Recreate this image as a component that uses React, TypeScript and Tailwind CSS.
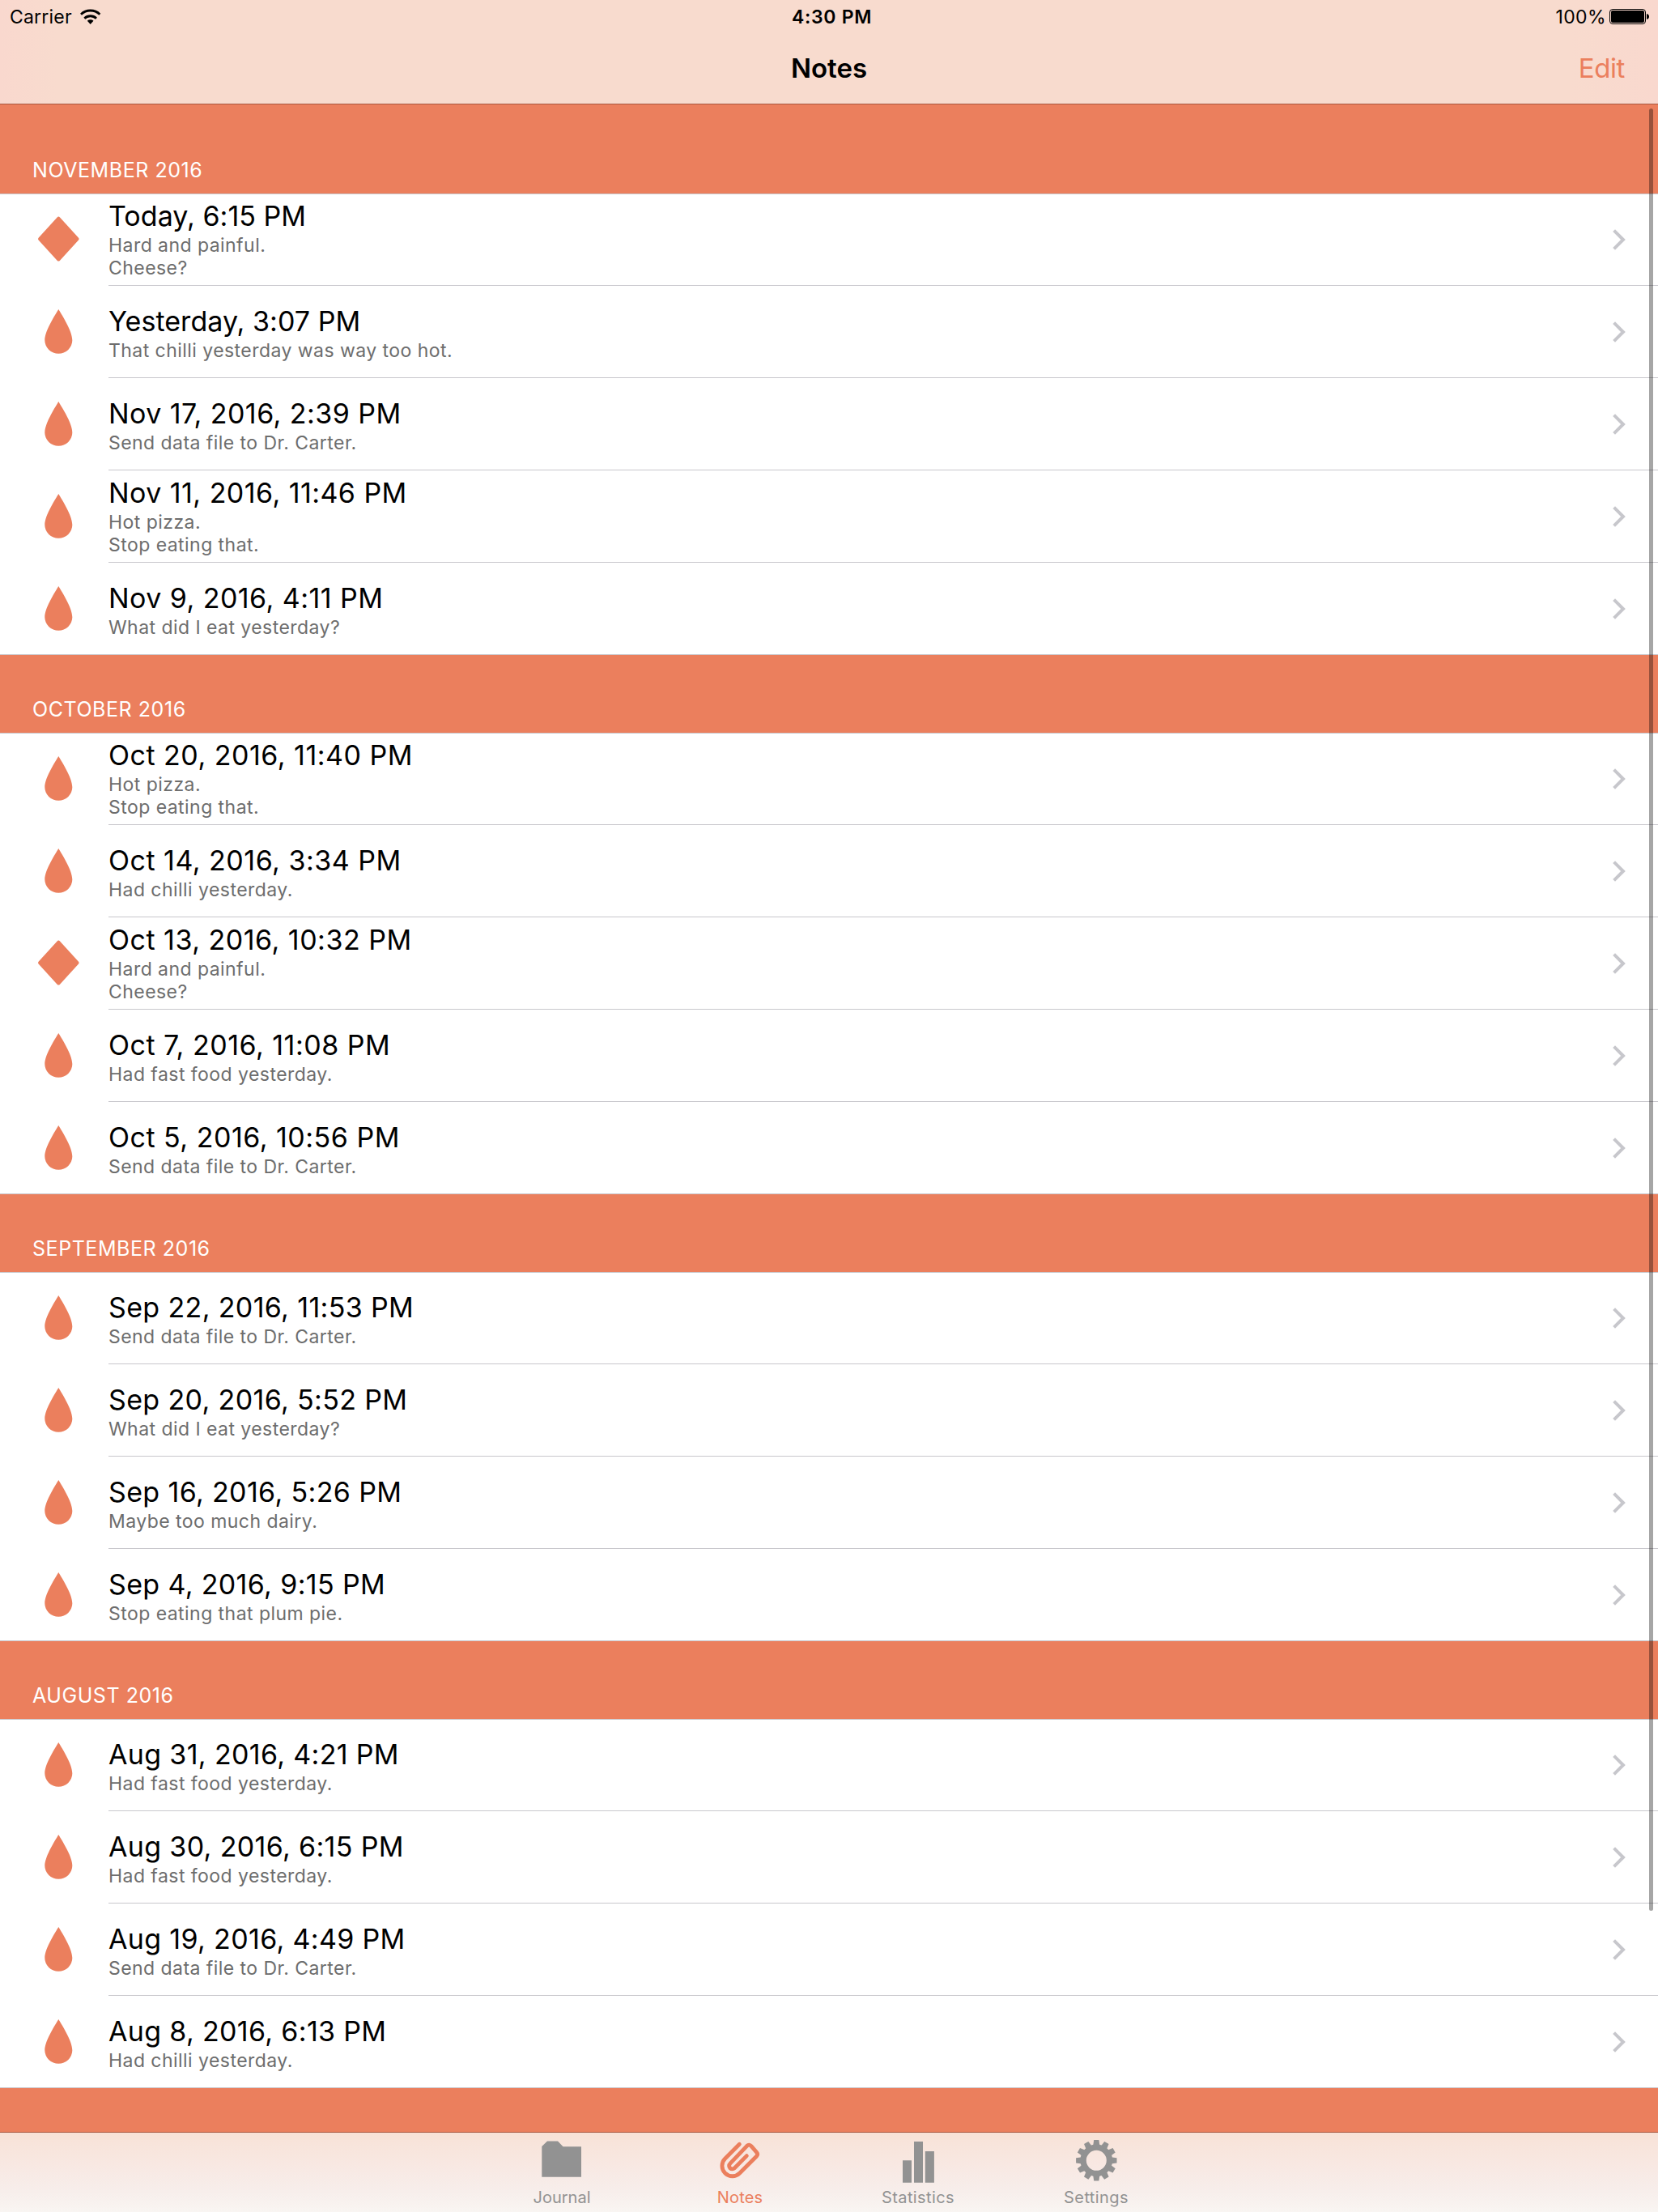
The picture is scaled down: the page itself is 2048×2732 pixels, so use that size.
import type { ReactNode } from 'react';

type Kind = 'drop' | 'diamond';
type Note = { kind: Kind; date: string; lines: string[] };
type Section = { title: string; tracking: string; notes: Note[] };

const note = (date: string, lines: string[], kind: Kind = 'drop'): Note => ({ kind, date, lines });

const sections: Section[] = [
  {
    title: 'NOVEMBER 2016',
    tracking: 'tracking-[0.45px]',
    notes: [
      note('Today, 6:15 PM', ['Hard and painful.', 'Cheese?'], 'diamond'),
      note('Yesterday, 3:07 PM', ['That chilli yesterday was way too hot.']),
      note('Nov 17, 2016, 2:39 PM', ['Send data file to Dr. Carter.']),
      note('Nov 11, 2016, 11:46 PM', ['Hot pizza.', 'Stop eating that.']),
      note('Nov 9, 2016, 4:11 PM', ['What did I eat yesterday?']),
    ],
  },
  {
    title: 'OCTOBER 2016',
    tracking: 'tracking-[0.5px]',
    notes: [
      note('Oct 20, 2016, 11:40 PM', ['Hot pizza.', 'Stop eating that.']),
      note('Oct 14, 2016, 3:34 PM', ['Had chilli yesterday.']),
      note('Oct 13, 2016, 10:32 PM', ['Hard and painful.', 'Cheese?'], 'diamond'),
      note('Oct 7, 2016, 11:08 PM', ['Had fast food yesterday.']),
      note('Oct 5, 2016, 10:56 PM', ['Send data file to Dr. Carter.']),
    ],
  },
  {
    title: 'SEPTEMBER 2016',
    tracking: 'tracking-[0.36px]',
    notes: [
      note('Sep 22, 2016, 11:53 PM', ['Send data file to Dr. Carter.']),
      note('Sep 20, 2016, 5:52 PM', ['What did I eat yesterday?']),
      note('Sep 16, 2016, 5:26 PM', ['Maybe too much dairy.']),
      note('Sep 4, 2016, 9:15 PM', ['Stop eating that plum pie.']),
    ],
  },
  {
    title: 'AUGUST 2016',
    tracking: 'tracking-[0.34px]',
    notes: [
      note('Aug 31, 2016, 4:21 PM', ['Had fast food yesterday.']),
      note('Aug 30, 2016, 6:15 PM', ['Had fast food yesterday.']),
      note('Aug 19, 2016, 4:49 PM', ['Send data file to Dr. Carter.']),
      note('Aug 8, 2016, 6:13 PM', ['Had chilli yesterday.']),
    ],
  },
];

function Wifi() {
  return (
    <svg className="h-8 w-11" viewBox="0 0 132 96" fill="none" stroke="#000" strokeWidth="8.5">
      <path d="M33 38a51 51 0 0 1 70 0M46 53a32 32 0 0 1 44 0" />
      <path d="M68 75 56.500 62.500a17 17 0 0 1 23 0z" fill="#000" stroke="none" />
    </svg>
  );
}

function Battery() {
  return (
    <svg className="h-[19px] w-[49px]" viewBox="0 0 49 19">
      <rect x="0.5" y="0.5" width="44" height="18" rx="3.500" fill="none" stroke="#000" />
      <rect x="2" y="2" width="41" height="15" rx="2" />
      <path d="M46 6c2 .3 3 1.700 3 3.500S48 12.700 46 13z" />
    </svg>
  );
}

function KindIcon({ kind }: { kind: Kind }) {
  return (
    <svg className="mb-[29px] ml-11 h-14 w-14 shrink-0 self-end" viewBox="0 0 56 56" fill="#eb7f5d">
      {kind === 'diamond' ? (
        <path d="M26.600 1.500Q28.300-.3 30 1.500L52.800 26.600Q54.300 28.200 52.800 29.800L30 54.700Q28.300 56.500 26.600 54.700L3.800 29.800Q2.300 28.200 3.800 26.600z" />
      ) : (
        <path d="M28.300 1C31.700 6.800 45.300 27.500 45.300 39.200A17 16.600 0 0 1 11.300 39.200C11.300 27.500 24.900 6.800 28.300 1z" />
      )}
    </svg>
  );
}

function Row({ item, tracking, first, last }: { item: Note; tracking: string; first: boolean; last: boolean }) {
  return (
    <li className={first ? 'flex h-[113px] bg-white' : 'flex h-[114px] bg-white'}>
      <div className={`flex w-[134px] border-b ${last ? 'border-[#c8c7cc]' : 'border-white'}`}>
        <KindIcon kind={item.kind} />
      </div>
      <div
        className={
          item.lines.length > 1
            ? 'flex flex-1 flex-col justify-end border-b border-[#c8c7cc] pb-[7px]'
            : 'flex flex-1 flex-col justify-end border-b border-[#c8c7cc] pb-[19px]'
        }
      >
        <h3
          className={`text-[34px] leading-[44px] text-black ${item.date.includes('2016') ? tracking : 'tracking-[0.05px]'}`}
        >
          {item.date}
        </h3>
        {item.lines.map((line) => (
          <p key={line} className="text-[23px] leading-7 tracking-[0.45px] text-[#6d6d6d]">
            {line}
          </p>
        ))}
      </div>
      <div className="flex w-[56px] items-end border-b border-[#c8c7cc] pb-[42px]">
        <svg className="h-7 w-4" viewBox="0 0 16 28" fill="none" stroke="#c7c7cc" strokeWidth="4">
          <path d="M1.600 2.700 13 14 1.600 25.300" />
        </svg>
      </div>
    </li>
  );
}

function Gear() {
  return (
    <g transform="translate(30.300 28.300)">
      <circle r="16.200" fill="none" stroke="#929292" strokeWidth="7.400" />
      {Array.from({ length: 12 }, (_, i) => (
        <path key={i} d="M-4.100-18-3.100-25.200H3.100L4.100-18z" transform={`rotate(${i * 30})`} fill="#929292" />
      ))}
    </g>
  );
}

function Tab({ label, active, tracking, children }: { label: string; active?: boolean; tracking: string; children: ReactNode }) {
  return (
    <div className="flex w-[220px] flex-col items-center pt-1.5">
      <svg className="h-[60px] w-[60px]" viewBox="0 0 60 60" fill="#929292">
        {children}
      </svg>
      <span className={`text-[20px] leading-7 ${tracking} ${active ? 'text-[#eb7f5d]' : 'text-[#929292]'}`}>{label}</span>
    </div>
  );
}

export default function App() {
  return (
    <div className="relative flex h-[2732px] w-[2048px] flex-col overflow-hidden bg-[#eb7f5d] font-['Inter',sans-serif]">
      <header className="h-[129px] shrink-0 border-b border-[#a8573f] bg-[linear-gradient(90deg,#f9d8ce_0,#f8dbce_70px,#f8dbce_1940px,#f9d8ce_100%)] text-black">
        <div className="grid h-[41px] grid-cols-3 items-center text-[23px]">
          <div className="flex items-center pl-3">
            <span className="pt-0.5 tracking-[0.2px]">Carrier</span>
            <div className="-my-2">
              <Wifi />
            </div>
          </div>
          <div className="pt-0.5 pl-[7px] text-center font-semibold tracking-[0.7px]">4:30 PM</div>
          <div className="flex items-center justify-end pr-[11px]">
            <span className="mr-1 pt-0.5 tracking-[0.4px]">100%</span>
            <Battery />
          </div>
        </div>
        <div className="grid h-[87px] grid-cols-3 items-center pt-px text-[33px]">
          <span />
          <h1 className="text-center font-semibold">Notes</h1>
          <span className="pr-[41px] text-right tracking-[-0.4px] text-[#eb7f5d]">Edit</span>
        </div>
      </header>

      <main className="min-h-0 flex-1 overflow-hidden">
        {sections.map((s, i) => (
          <section key={s.title}>
            <h2
              className={
                i === 0
                  ? 'flex h-[110px] items-end pb-[13px] pl-10 text-[25px] leading-8 tracking-[0.55px] text-white'
                  : 'flex h-24 items-end pb-[13px] pl-10 text-[25px] leading-8 tracking-[0.55px] text-white'
              }
            >
              {s.title}
            </h2>
            <ul className="border-t border-[#c8c7cc]">
              {s.notes.map((n, j) => (
                <Row key={n.date} item={n} tracking={s.tracking} first={j === 0} last={j === s.notes.length - 1} />
              ))}
            </ul>
          </section>
        ))}
      </main>

      <nav className="flex h-[99px] shrink-0 justify-center border-t border-[#a8573f] bg-[linear-gradient(180deg,#f8e2d7_0%,#f8e8e2_40%,#f7edea_70%,#f9f5f2_100%)]">
        <Tab label="Journal" tracking="tracking-normal">
          <path d="M5.300 11 12 4.500H25L31.500 11.300H54V48.700H5.300z" />
        </Tab>
        <Tab label="Notes" tracking="tracking-[0.2px]" active>
          <path
            d="M88 25 35 78A38 38 0 0 0 89 132L152 69Q158 62 152 55L132 32Q124 23 116 31L53.500 96.500A11.500 11.500 0 0 0 70 113.500L115 68"
            transform="scale(0.33333)"
            fill="none"
            stroke="#eb7f5d"
            strokeWidth="14.500"
            strokeLinecap="round"
            strokeLinejoin="round"
          />
        </Tab>
        <Tab label="Statistics" tracking="tracking-[0.4px]">
          <path d="M11 28.300H22V55.700H11zM25 5H36V55.700H25zM38.800 17H49.900V55.700H38.800z" />
        </Tab>
        <Tab label="Settings" tracking="tracking-[0.4px]">
          <Gear />
        </Tab>
      </nav>

      <div className="absolute top-[134px] right-[6px] h-[2226px] w-[5px] rounded-full bg-black/35" />
    </div>
  );
}
